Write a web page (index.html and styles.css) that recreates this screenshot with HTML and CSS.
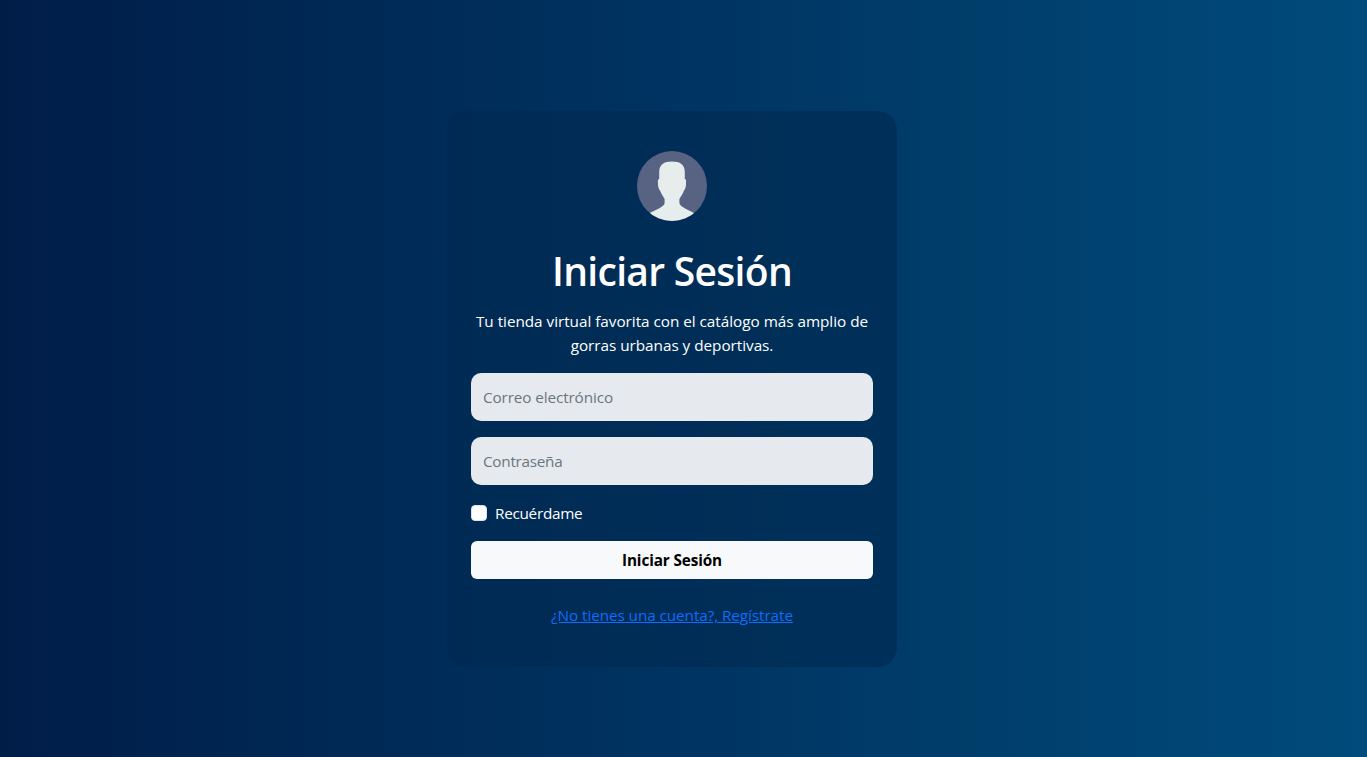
FILE: index.html
```html
<!DOCTYPE html>
<html lang="es">
<head>
<meta charset="utf-8">
<title>Iniciar Sesión</title>
<link rel="stylesheet" href="styles.css">
</head>
<body>
<main class="login-card">
  <svg class="avatar" viewBox="0 0 70 70" aria-hidden="true">
    <defs><clipPath id="avatar-clip"><circle cx="35" cy="35" r="35"/></clipPath></defs>
    <g clip-path="url(#avatar-clip)">
      <rect width="70" height="70" fill="#586282"/>
      <path fill="#e7eded" d="M35 10.5C43 10.5 47.8 13.6 47.8 21V28C49.3 28 49.2 30 49 33.5C48.8 37 48 38 47 39.500C46 43 43.500 46 42.400 48V52C43 55 47 57 57 62V70H12.500V62C22 57.500 27.500 55 27.600 52V48C26.500 46 24.300 43 23 39.500C22 38 21.200 37 21 33.500C20.800 30 20.700 28 22.200 28V21C22.200 13.600 27 10.500 35 10.500Z"/>
    </g>
  </svg>
  <h1 class="title">Iniciar Sesión</h1>
  <p class="intro">Tu tienda virtual favorita con el catálogo más amplio de<br>gorras urbanas y deportivas.</p>
  <form class="login-form">
    <input class="field email" type="email" placeholder="Correo electrónico">
    <input class="field password" type="password" placeholder="Contraseña">
    <label class="remember"><input class="check" type="checkbox"><span>Recuérdame</span></label>
    <button class="submit" type="button">Iniciar Sesión</button>
  </form>
  <a class="register" href="#">¿No tienes una cuenta?, Regístrate</a>
</main>
</body>
</html>
```
FILE: styles.css
```css
* { box-sizing: border-box; }
body {
  margin: 0;
  height: 100vh;
  padding: 21px 23px 0 0;
  display: flex;
  align-items: center;
  justify-content: center;
  overflow: hidden;
  background: linear-gradient(to right, #001d48, #004b7b);
  color: #fff;
  font-family: "Segoe UI", "Open Sans", "Noto Sans", sans-serif;
  font-size: 15.3px;
  line-height: 24px;
}
.login-card {
  width: 450px;
  height: 556px;
  padding: 40px 24px;
  display: flex;
  flex-direction: column;
  align-items: center;
  border-radius: 20px;
  background: rgba(0, 41, 80, .6);
}
.avatar { width: 70px; height: 70px; flex: none; }
.title {
  margin: 26px 0 14px;
  font-size: 39px;
  font-weight: 600;
  line-height: 48px;
  letter-spacing: -.7px;
  white-space: nowrap;
}
.intro { margin: 0 0 16px; text-align: center; letter-spacing: -.03px; white-space: nowrap; }
.login-form { width: 100%; display: flex; flex-direction: column; }
.field {
  width: 100%;
  height: 48px;
  margin: 0 0 16px;
  padding: 0 12px;
  border: 0;
  border-radius: 10px;
  background: rgba(255, 255, 255, .9);
  font: inherit;
  letter-spacing: -.12px;
}
.password { letter-spacing: -.28px; }
.field::placeholder { color: #6c757d; opacity: 1; }
.remember { height: 24px; display: flex; align-items: center; gap: 8px; letter-spacing: -.28px; }
.check {
  appearance: none;
  width: 16px;
  height: 16px;
  margin: 0;
  border: 1px solid #dee2e6;
  border-radius: 4px;
  background: #fff;
}
.submit {
  height: 38px;
  margin: 16px 0 0;
  padding: 0;
  border: 0;
  border-radius: 6px;
  background: #f8f9fa;
  color: #000;
  font: inherit;
  font-weight: 700;
  letter-spacing: -.12px;
}
.register { margin-top: 24px; color: #0d6efd; letter-spacing: -.08px; white-space: nowrap; }
```
